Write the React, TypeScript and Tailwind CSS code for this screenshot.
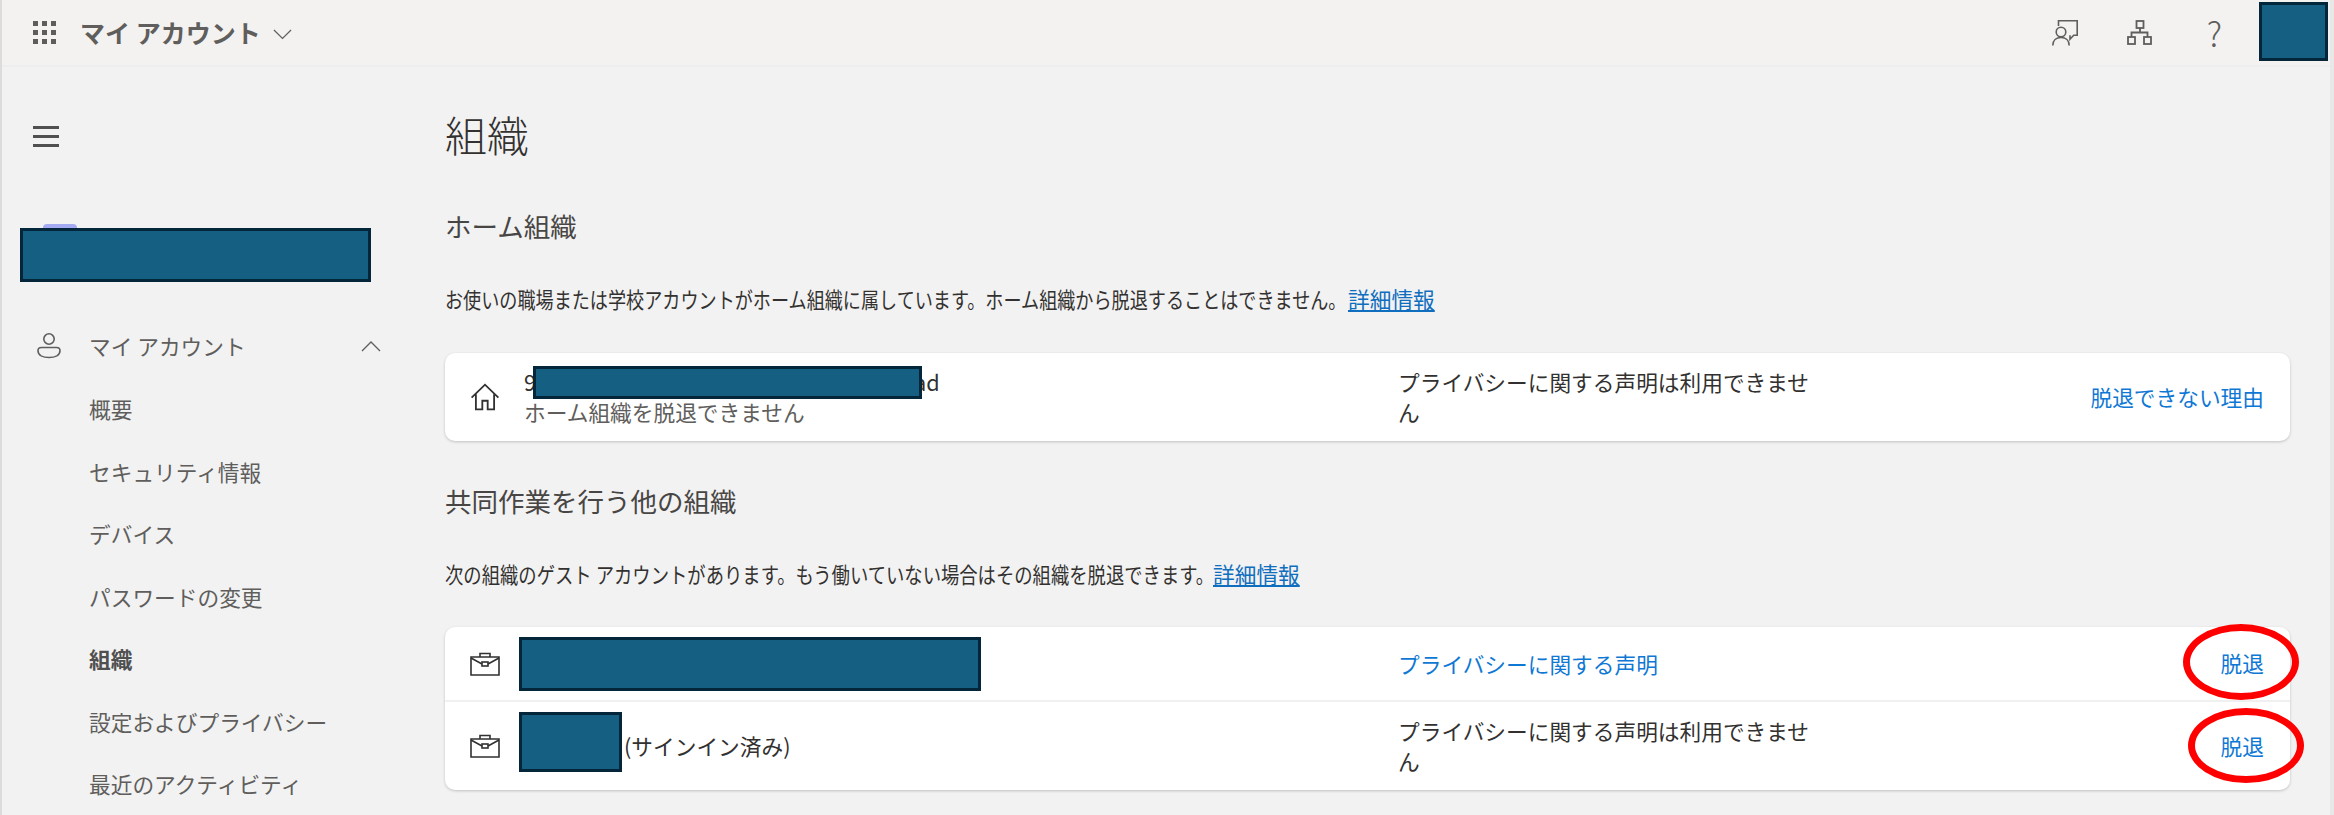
import { ReactNode } from "react";

const FONT = "font-['Noto_Sans_CJK_JP','Noto_Sans',sans-serif]";

const Redact = ({ className }: { className: string }) => (
  <div className={`relative shrink-0 border-[3px] border-[#03263a] bg-[#156082] ${className}`} />
);

const Waffle = () => (
  <svg width="26" height="26" viewBox="0 0 26 26" fill="#5f5d5b">
    {[1, 10, 19].flatMap((y) =>
      [1, 10, 19].map((x) => <rect key={`${x}-${y}`} x={x} y={y} width="5" height="5" />)
    )}
  </svg>
);

const Feedback = () => (
  <svg width="26" height="26" viewBox="0 0 26 26" fill="none" stroke="#605e5c" strokeWidth="1.6">
    <path d="M6.500 6V.8h18.700v14.500h-3.500l-3.700 4v-4" />
    <circle cx="9" cy="12" r="4.800" />
    <path d="M.8 25.500c0-5 3.500-8 8.200-8s8.200 3 8.200 8" />
  </svg>
);

const OrgTree = () => (
  <svg width="26" height="26" viewBox="0 0 26 26" fill="none" stroke="#605e5c" strokeWidth="1.8">
    <rect x="9.500" y="1" width="7" height="7" />
    <rect x="1" y="17" width="7" height="7" />
    <rect x="17" y="17" width="7" height="7" />
    <path d="M13 8v4.500M4.500 17v-4.500h16v4.500" />
  </svg>
);

const Person = () => (
  <svg width="24" height="28" viewBox="0 0 24 28" fill="none" stroke="#605e5c" strokeWidth="1.6">
    <circle cx="12" cy="7" r="5.200" />
    <path d="M4.500 15.500h15c2.200 0 3.500 1.500 3.500 3.200 0 4.500-5 6.800-11 6.800S1 23.200 1 18.700c0-1.700 1.300-3.200 3.500-3.200z" />
  </svg>
);

const Home = () => (
  <svg width="30" height="30" viewBox="0 0 28 28" fill="none" stroke="#323130" strokeWidth="1.700">
    <path d="M1.500 14.500 14 2.500l12.500 12M5.500 11.500v14h6v-8h5v8h6v-14" />
  </svg>
);

const Briefcase = () => (
  <svg width="30" height="24" viewBox="0 0 30 24" fill="none" stroke="#323130" strokeWidth="1.600">
    <path d="M1 5h28v18H1z" />
    <path d="M10 5V1.500h10V5M1 6l11 6M29 6l-11 6" />
    <rect x="12" y="10" width="6" height="4" />
  </svg>
);

const Chevron = ({ up, className }: { up?: boolean; className: string }) => (
  <svg viewBox="0 0 20 11" fill="none" stroke="#605e5c" strokeWidth="1.300" className={className}>
    <path d={up ? "M1 10 10 1l9 9" : "M1 1l9 9 9-9"} />
  </svg>
);

const navItems = ["概要", "セキュリティ情報", "デバイス", "パスワードの変更", "組織", "設定およびプライバシー", "最近のアクティビティ"];

const Row = ({
  icon,
  name,
  privacy,
  action,
  className,
  children,
}: {
  icon: ReactNode;
  name: ReactNode;
  privacy: ReactNode;
  action: string;
  className: string;
  children?: ReactNode;
}) => (
  <div className={`relative flex items-center ${className}`}>
    <div className="flex w-[74px] shrink-0 justify-center pl-[6px]">{icon}</div>
    <div className="w-[879px] shrink-0 text-[21.700px] text-[#323130]">{name}</div>
    <div className="w-[425px] shrink-0 text-[21.700px] leading-[30px]">{privacy}</div>
    <a className="ml-auto pr-[26px] text-[21.700px] text-[#0f78d4]">{action}</a>
    {children}
  </div>
);

const noPrivacy = <span className="text-[#323130]">プライバシーに関する声明は利用できません</span>;

export default function App() {
  return (
    <div className={`${FONT} flex h-[815px] w-[2334px] flex-col overflow-hidden border-x-[2px] border-r-[4px] border-l-[#dcdcdc] border-r-[#e8e8e8] bg-[#f2f2f2]`}>
      {/* top bar */}
      <header className="flex h-[67px] shrink-0 items-center border-b-2 border-[#eeeeee] bg-[#f3f2f1] pr-[2px]">
        <div className="ml-[30px]">
          <Waffle />
        </div>
        <span className="ml-[22px] text-[25px] font-bold text-[#605e5c]">マイ アカウント</span>
        <Chevron className="ml-[12px] mt-[4px] w-[19px]" />
        <div className="ml-auto flex items-center">
          <Feedback />
          <div className="ml-[49px]">
            <OrgTree />
          </div>
          <span className="ml-[54px] text-[34px] font-extralight leading-none text-[#605e5c]">?</span>
          <Redact className="ml-[37px] mb-[3px] h-[59px] w-[69px]" />
        </div>
      </header>

      <div className="flex min-h-0 flex-1">
        {/* left nav */}
        <nav className="flex w-[443px] shrink-0 flex-col">
          <div className="ml-[31px] mt-[59px] flex h-[21px] w-[26px] flex-col justify-between">
            <div className="h-[3px] bg-[#505050]" />
            <div className="h-[3px] bg-[#505050]" />
            <div className="h-[3px] bg-[#505050]" />
          </div>
          <div className="ml-[41px] mt-[77px] h-[4px] w-[34px] rounded-t-full bg-[#a4abf2]" />
          <Redact className="ml-[18px] h-[54px] w-[351px]" />
          <div className="mt-[38px] flex h-[52px] items-center pl-[35px] pr-[64px]">
            <Person />
            <span className="ml-[28px] text-[21.700px] text-[#605e5c]">マイ アカウント</span>
            <Chevron up className="ml-auto w-[20px]" />
          </div>
          <ul className="mt-[17px] flex flex-col gap-[22.500px] pl-[87px]">
            {navItems.map((item) => (
              <li
                key={item}
                className={`h-[40px] text-[21.700px] leading-[40px] ${
                  item === "組織" ? "font-bold text-[#505050]" : "text-[#605e5c]"
                }`}
              >
                {item}
              </li>
            ))}
          </ul>
        </nav>

        {/* main */}
        <main className="w-[1845px] shrink-0">
          <h1 className="mt-[37px] text-[42px] font-light leading-[60px] text-[#323130]">組織</h1>

          <h2 className="mt-[42px] text-[26.500px] leading-[40px] text-[#484644]">ホーム組織</h2>
          <p className="mt-[38px] flex h-[30px] items-center text-[21.700px] text-[#323130]">
            <span className="w-[903px] origin-left scale-x-[0.835] whitespace-nowrap">
              お使いの職場または学校アカウントがホーム組織に属しています。ホーム組織から脱退することはできません。
            </span>
            <a className="text-[#106ebe] underline">詳細情報</a>
          </p>

          <section className="mt-[39px] h-[88px] rounded-[10px] bg-white shadow-[0_1px_3px_rgba(0,0,0,0.2)]">
            <Row
              className="h-[88px]"
              icon={<Home />}
              name={
                <div className="pl-[5px] leading-[30px]">
                  <div className="flex h-[30px] items-center">
                    <span>9</span>
                    <Redact className="-ml-[3px] h-[33px] w-[389px]" />
                    <span className="-ml-[8px]">ad</span>
                  </div>
                  <div className="text-[#605e5c]">ホーム組織を脱退できません</div>
                </div>
              }
              privacy={noPrivacy}
              action="脱退できない理由"
            />
          </section>

          <h2 className="mt-[40px] text-[26.500px] leading-[40px] text-[#484644]">共同作業を行う他の組織</h2>
          <p className="mt-[38px] flex h-[30px] items-center text-[21.700px] text-[#323130]">
            <span className="w-[768px] origin-left scale-x-[0.845] whitespace-nowrap">
              次の組織のゲスト アカウントがあります。もう働いていない場合はその組織を脱退できます。
            </span>
            <a className="text-[#106ebe] underline">詳細情報</a>
          </p>

          <section className="mt-[38px] h-[163px] rounded-[10px] bg-white shadow-[0_1px_3px_rgba(0,0,0,0.2)]">
            <Row
              className="h-[75px] border-b-2 border-[#f0f0f0]"
              icon={<Briefcase />}
              name={<Redact className="h-[54px] w-[462px]" />}
              privacy={<span className="text-[#0f78d4]">プライバシーに関する声明</span>}
              action="脱退"
            >
              <div className="absolute -right-[9px] -top-[3px] h-[76px] w-[116px] rounded-[50%] border-[7px] border-[#fe0000]" />
            </Row>
            <Row
              className="h-[88px]"
              icon={<Briefcase />}
              name={
                <div className="flex items-center">
                  <Redact className="mb-[8px] h-[60px] w-[103px]" />
                  <span className="ml-[2px]">(サインイン済み)</span>
                </div>
              }
              privacy={noPrivacy}
              action="脱退"
            >
              <div className="absolute -right-[14px] top-[6px] h-[75px] w-[116px] rounded-[50%] border-[7px] border-[#fe0000]" />
            </Row>
          </section>
        </main>
      </div>
    </div>
  );
}
